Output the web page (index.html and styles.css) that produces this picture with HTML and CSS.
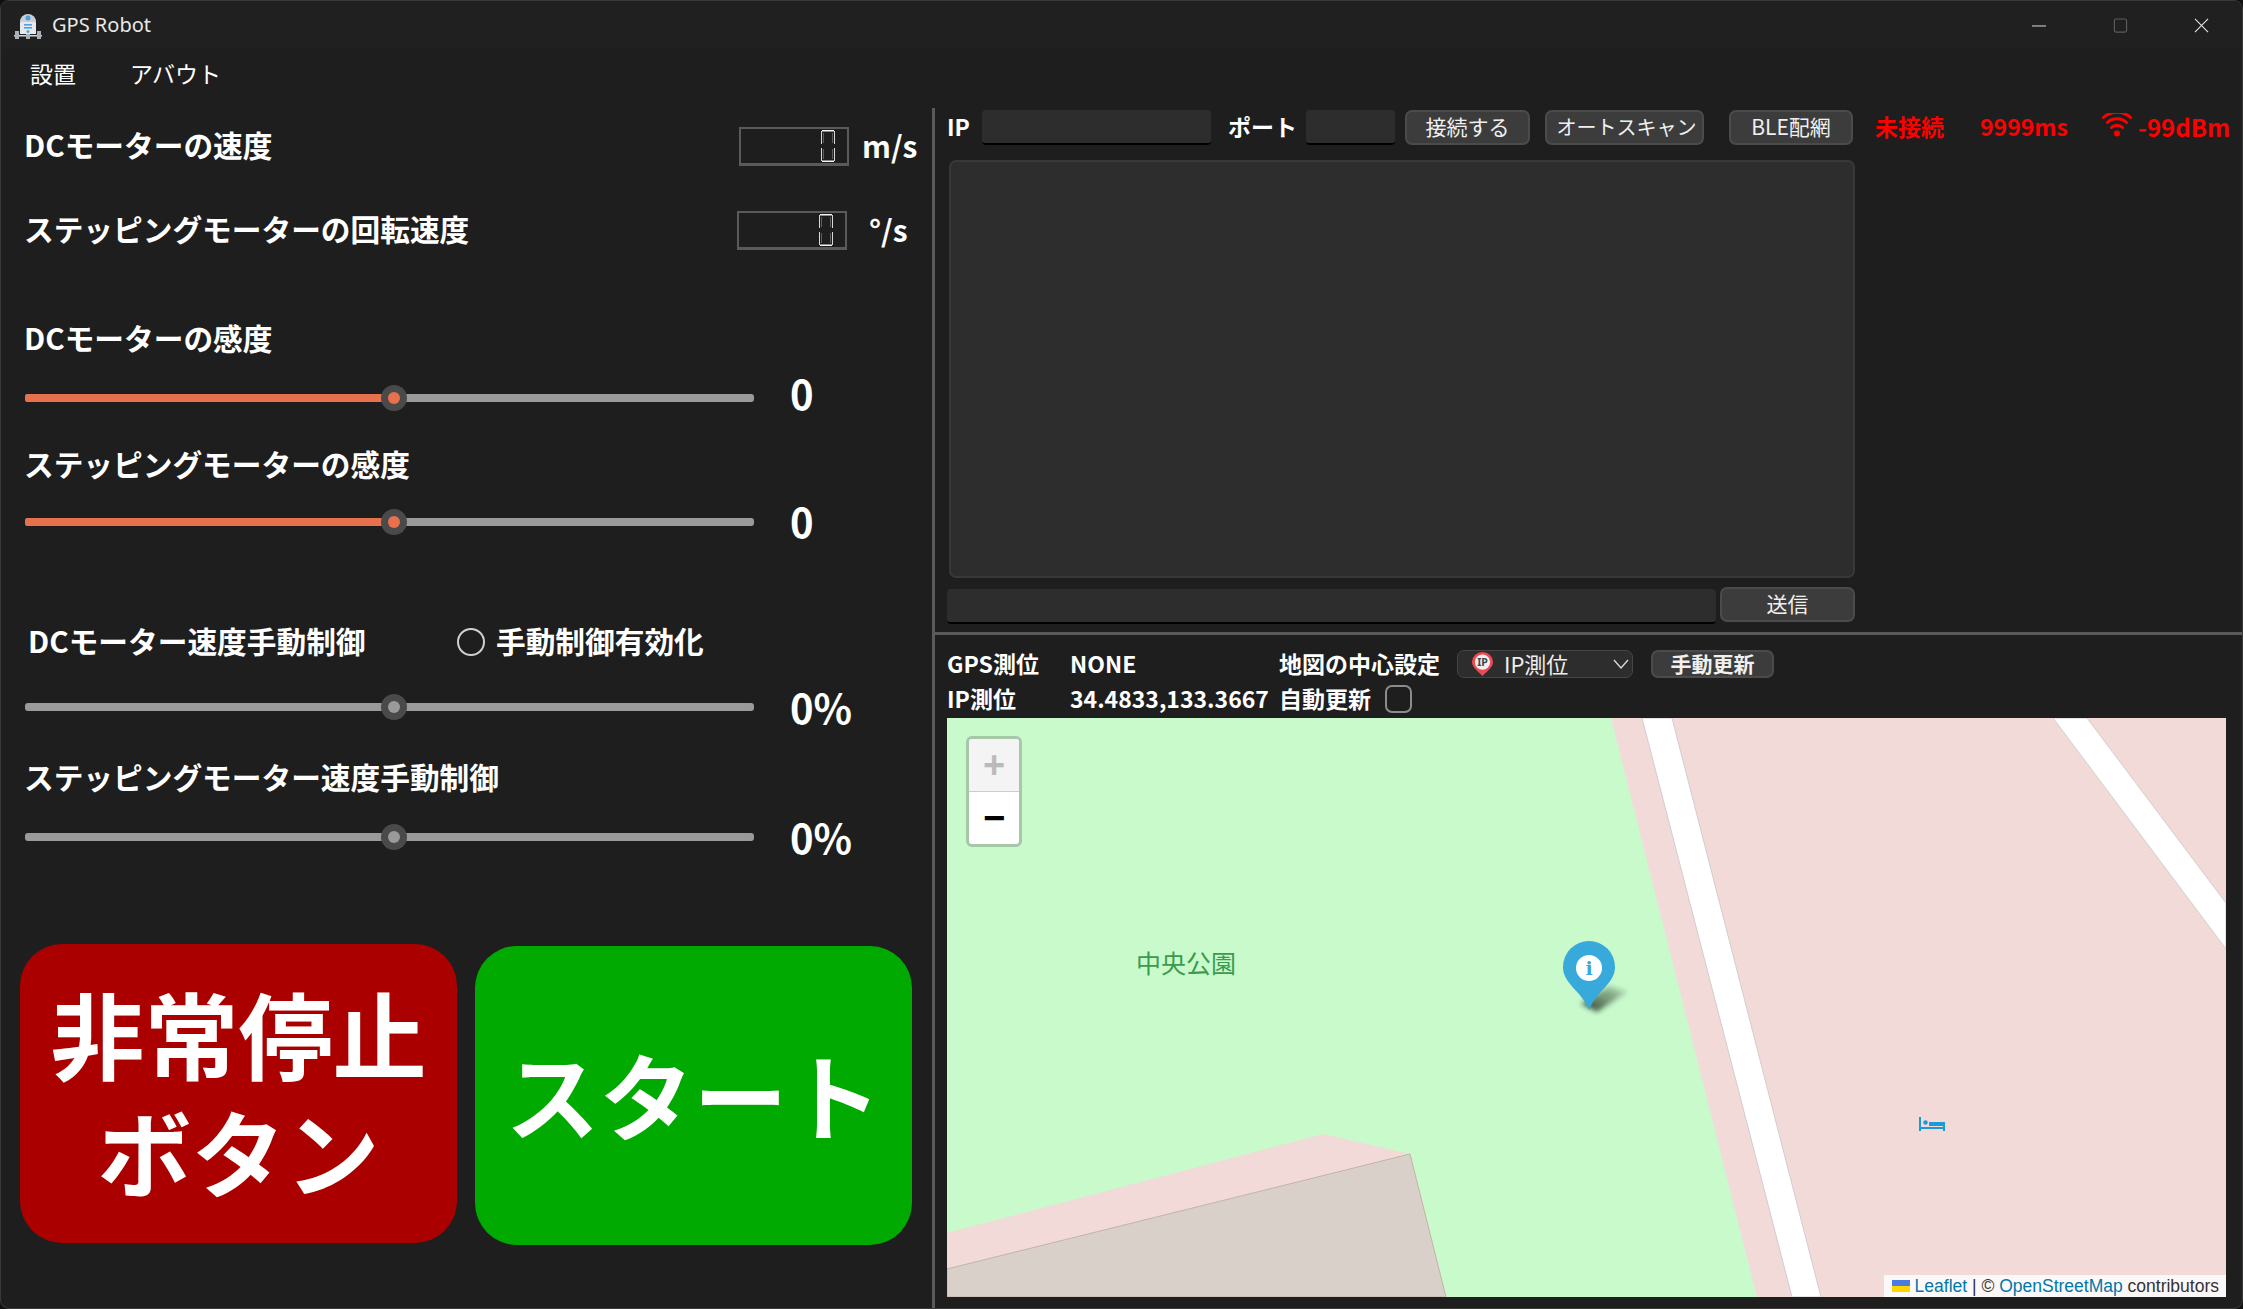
FILE: index.html
```html
<!DOCTYPE html>
<html lang="ja">
<head>
<meta charset="utf-8">
<title>GPS Robot</title>
<link rel="stylesheet" href="styles.css">
</head>
<body>
<div class="window">
  <header class="titlebar">
    <svg class="app-icon" viewBox="0 0 28 28">
      <path d="M6 12a8 8 0 0 1 16 0v11H6z" fill="#e6e8ec"/>
      <path d="M6 11a8 8 0 0 1 16 0z" fill="#c9ced6"/>
      <circle cx="14" cy="7" r="2.500" fill="#4aa3e0"/>
      <rect x="10" y="13" width="8" height="1.600" fill="#4aa3e0"/>
      <rect x="10" y="16" width="8" height="1.600" fill="#4aa3e0"/>
      <circle cx="14" cy="20.500" r="1.500" fill="#4aa3e0"/>
      <rect x="0" y="24" width="28" height="1.500" fill="#d7dade"/>
      <rect x="1" y="20" width="4" height="8" fill="#aab0b8"/>
      <rect x="12" y="23" width="4" height="5" fill="#aab0b8"/>
      <rect x="23" y="20" width="4" height="8" fill="#aab0b8"/>
    </svg>
    <span class="app-title">GPS Robot</span>
    <div class="win-controls">
      <svg class="win-btn" viewBox="0 0 16 16"><path d="M0 8.500h15" stroke="#e8e8e8" stroke-width="1" fill="none"/></svg>
      <svg class="win-btn" viewBox="0 0 16 16"><rect x="1.500" y="1" width="13" height="14" rx="2" stroke="#5c5c5c" stroke-width="1.200" fill="none"/></svg>
      <svg class="win-btn" viewBox="0 0 16 16"><path d="M1 1l14 14M15 1L1 15" stroke="#e8e8e8" stroke-width="1.100" fill="none"/></svg>
    </div>
  </header>
  <nav class="menubar">
    <span class="menu-item">設置</span>
    <span class="menu-item menu-about">アバウト</span>
  </nav>
  <main class="main">
    <section class="left">
      <div class="speed-row row-first">
        <span class="label">DCモーターの速度</span>
        <div class="lcd lcd-a">
          <svg class="lcd-digit" viewBox="0 0 14 32"><path d="M1 .8h12M1 31.200h12" stroke="#f4f4f4" stroke-width="1.600" fill="none"/><path d="M.5 1v13M.5 18v13M13.500 1v13M13.500 18v13" stroke="#d8d8d8" stroke-width="1" fill="none"/><path d="M2.500 3v10M2.500 19v10M11.500 3v10M11.500 19v10" stroke="#5e5e5e" stroke-width="1" fill="none"/></svg>
        </div>
        <span class="unit unit-ms">m/s</span>
      </div>
      <div class="speed-row row-second">
        <span class="label">ステッピングモーターの回転速度</span>
        <div class="lcd lcd-b">
          <svg class="lcd-digit" viewBox="0 0 14 32"><path d="M1 .8h12M1 31.200h12" stroke="#f4f4f4" stroke-width="1.600" fill="none"/><path d="M.5 1v13M.5 18v13M13.500 1v13M13.500 18v13" stroke="#d8d8d8" stroke-width="1" fill="none"/><path d="M2.500 3v10M2.500 19v10M11.500 3v10M11.500 19v10" stroke="#5e5e5e" stroke-width="1" fill="none"/></svg>
        </div>
        <span class="unit unit-deg">°/s</span>
      </div>

      <div class="label-row mt-sens1"><span class="label">DCモーターの感度</span></div>
      <div class="slider-row mt-slider1">
        <div class="slider"><div class="fill"></div><div class="knob knob-active"></div></div>
        <span class="value value-up">0</span>
      </div>
      <div class="label-row mt-sens2"><span class="label">ステッピングモーターの感度</span></div>
      <div class="slider-row mt-slider2">
        <div class="slider"><div class="fill"></div><div class="knob knob-active"></div></div>
        <span class="value">0</span>
      </div>

      <div class="label-row mt-manual1">
        <span class="label label-manual">DCモーター速度手動制御</span>
        <span class="radio"></span>
        <span class="label">手動制御有効化</span>
      </div>
      <div class="slider-row mt-slider3">
        <div class="slider"><div class="knob"></div></div>
        <span class="value value-down">0%</span>
      </div>
      <div class="label-row mt-manual2"><span class="label">ステッピングモーター速度手動制御</span></div>
      <div class="slider-row mt-slider4">
        <div class="slider"><div class="knob"></div></div>
        <span class="value value-down">0%</span>
      </div>

      <div class="big-buttons">
        <div class="big-btn big-red">非常停止<br>ボタン</div>
        <div class="big-btn big-green">スタート</div>
      </div>
    </section>
    <div class="vsplit"></div>
    <section class="right">
      <div class="toolbar">
        <span class="tb-label w-ip">IP</span>
        <div class="field w-ipfield"></div>
        <span class="tb-label w-port">ポート</span>
        <div class="field w-portfield"></div>
        <div class="btn w-connect">接続する</div>
        <div class="btn w-scan">オートスキャン</div>
        <div class="btn w-ble">BLE配網</div>
        <span class="status w-status">未接続</span>
        <span class="status w-ping">9999ms</span>
        <svg class="wifi" viewBox="0 0 30 24">
          <circle cx="15" cy="20.500" r="3" fill="#f00"/>
          <path d="M9.500 14.500a8 8 0 0 1 11 0M5.500 9.500a14 14 0 0 1 19 0M1.500 4.500a20 20 0 0 1 27 0" fill="none" stroke="#f00" stroke-width="3" stroke-linecap="round"/>
        </svg>
        <span class="status w-dbm">-99dBm</span>
      </div>
      <div class="console"></div>
      <div class="send-row">
        <div class="field w-sendfield"></div>
        <div class="btn w-send">送信</div>
      </div>
      <div class="hsplit"></div>
      <div class="gps-grid">
        <span class="gps-label">GPS測位</span>
        <span class="gps-label">NONE</span>
        <span class="gps-label">地図の中心設定</span>
        <div class="combo">
          <svg class="combo-pin" viewBox="0 0 23 25">
            <path d="M11.500 25C5 19 .5 15 .5 10.500a11 10.500 0 0 1 22 0C22.500 15 18 19 11.500 25z" fill="#f0484e"/>
            <circle cx="11.500" cy="10.500" r="8" fill="#eef0f4"/>
            <text class="pin-text" x="11.500" y="14.500">IP</text>
          </svg>
          <span class="combo-text">IP測位</span>
          <svg class="chevron" viewBox="0 0 16 10"><path d="M1 1l7 8 7-8" fill="none" stroke="#ddd" stroke-width="1.300"/></svg>
        </div>
        <div class="btn btn-bold">手動更新</div>
        <span class="gps-label">IP測位</span>
        <span class="gps-label">34.4833,133.3667</span>
        <div class="auto-cell"><span class="gps-label">自動更新</span><span class="checkbox"></span></div>
      </div>
      <div class="map">
        <svg class="map-svg" viewBox="0 0 1279 579" preserveAspectRatio="none">
          <defs>
            <filter id="blur" x="-30%" y="-50%" width="160%" height="200%"><feGaussianBlur stdDeviation="2.500"/></filter>
            <linearGradient id="shadow" x1="0" y1="1" x2="1" y2="0">
              <stop offset="0" stop-color="#1e2a1e" stop-opacity=".9"/>
              <stop offset="1" stop-color="#1e2a1e" stop-opacity=".1"/>
            </linearGradient>
          </defs>
          <rect width="1279" height="579" fill="#c8facc"/>
          <polygon points="664,0 1279,0 1279,579 810,579" fill="#f2dad9"/>
          <polygon points="695,0 725,0 874,579 845,579" fill="#fff" stroke="#d4cccc" stroke-width="1"/>
          <polygon points="1106,0 1140,0 1279,185 1279,231" fill="#fff" stroke="#d4cccc" stroke-width="1"/>
          <polygon points="0,515 376,416 463,436 499,579 0,579" fill="#f2dad9"/>
          <polygon points="0,551 463,436 499,579 0,579" fill="#d9d0c9" stroke="#c4b3a8" stroke-width="1"/>
          <text class="park" x="189" y="255">中央公園</text>
          <polygon points="634,286 650,294 680,274 662,268" fill="url(#shadow)" filter="url(#blur)"/>
          <path d="M642 292C634 272 616 266 616 249a26 26 0 0 1 52 0c0 17-18 23-26 43z" fill="#38a9db"/>
        </svg>
        <div class="marker-i">i</div>
        <svg class="bed" viewBox="0 0 26 14"><path d="M1 0v14M25 5v9M1 11h24" stroke="#1a9ad8" stroke-width="2" fill="none"/><circle cx="6.500" cy="5.500" r="2.200" fill="#1a9ad8"/><rect x="10" y="5" width="14" height="4" fill="#1a9ad8"/></svg>
        <div class="zoom-ctl">
          <div class="zoom-btn zoom-plus">+</div>
          <div class="zoom-btn zoom-minus">−</div>
        </div>
        <div class="attribution">
          <svg class="flag" viewBox="0 0 18 12"><rect width="18" height="6" fill="#4c7be0"/><rect y="6" width="18" height="6" fill="#ffd500"/></svg>
          <span class="link">Leaflet</span><span> | © </span><span class="link">OpenStreetMap</span><span> contributors</span>
        </div>
      </div>
    </section>
  </main>
</div>
</body>
</html>
```
FILE: styles.css
```css
* { box-sizing: border-box; }
html, body { margin: 0; height: 100%; background: #111; }
body { font-family: "Noto Sans CJK JP", "Noto Sans", sans-serif; color: #fff; overflow: hidden; }
.window { width: 2243px; height: 1309px; background: #1e1e1e; border: 1px solid #3a3a3a; border-radius: 9px; display: flex; flex-direction: column; overflow: hidden; }

.titlebar { height: 48px; flex: none; display: flex; align-items: center; background: #202020; padding-left: 13px; }
.app-icon { width: 28px; height: 28px; }
.app-title { margin-left: 10px; font-size: 20px; font-family: "Noto Sans", sans-serif; color: #e8e8e8; padding-bottom: 2px; }
.win-controls { margin-left: auto; display: flex; gap: 66px; padding-right: 33px; }
.win-btn { width: 15px; height: 15px; }

.menubar { height: 51px; flex: none; display: flex; align-items: center; padding-left: 29px; padding-bottom: 4px; font-size: 23px; }
.menu-about { margin-left: 54px; }

.main { flex: 1; display: flex; min-height: 0; }
.left { width: 931px; flex: none; padding-left: 23px; }
.vsplit { width: 3px; flex: none; margin-top: 8px; background: #5a5a5a; }

.label { font-size: 29.700px; font-weight: 700; white-space: nowrap; line-height: 40px; padding-bottom: 3px; }
.speed-row { height: 40px; display: flex; align-items: center; position: relative; }
.row-first { margin-top: 26px; }
.row-second { margin-top: 44px; }
.lcd { width: 110px; height: 39px; border: 2px solid #5a5a5a; border-bottom-width: 3px; display: flex; justify-content: flex-end; align-items: center; padding-right: 12px; flex: none; }
.lcd-a { margin-left: auto; margin-right: 83px; }
.lcd-b { margin-left: auto; margin-right: 85px; }
.lcd-digit { width: 14px; height: 32px; }
.unit { position: absolute; font-size: 30px; font-weight: 700; padding-bottom: 3px; }
.unit-ms { left: 838px; }
.unit-deg { left: 845px; }

.label-row { height: 40px; display: flex; align-items: center; }
.mt-sens1 { margin-top: 69px; }
.mt-sens2 { margin-top: 27px; }
.mt-manual1 { margin-top: 80px; }
.mt-manual2 { margin-top: 31px; }
.label-manual { margin-left: 4px; width: 429px; }
.radio { width: 28px; height: 28px; border: 2px solid #d0d0d0; border-radius: 50%; margin-right: 11px; flex: none; }

.slider-row { height: 40px; display: flex; align-items: center; }
.mt-slider1 { margin-top: 19px; }
.mt-slider2 { margin-top: 17px; }
.mt-slider3 { margin-top: 25px; }
.mt-slider4 { margin-top: 19px; }
.slider { width: 729px; height: 8px; margin-left: 1px; border-radius: 3px; background: #9a9a9a; position: relative; flex: none; }
.fill { position: absolute; left: 0; top: 0; bottom: 0; width: 370px; background: #e8714d; border-radius: 3px 0 0 3px; }
.knob { position: absolute; left: 356px; top: -9px; width: 26px; height: 26px; border-radius: 50%; background: #4a4a4a; }
.knob::after { content: ""; position: absolute; left: 7px; top: 7px; width: 12px; height: 12px; border-radius: 50%; background: #9a9a9a; }
.knob-active::after { background: #e8714d; }
.value { margin-left: 36px; font-size: 40px; font-weight: 700; line-height: 40px; padding-bottom: 3px; }
.value-up { margin-top: -7px; }
.value-down { margin-top: 3px; }

.big-buttons { margin-top: 87px; margin-left: -4px; display: flex; gap: 18px; align-items: flex-start; }
.big-btn { width: 437px; height: 299px; border-radius: 42px; display: flex; align-items: center; justify-content: center; text-align: center; font-size: 94px; font-weight: 700; line-height: 118px; padding-bottom: 6px; }
.big-red { background: #aa0000; }
.big-green { background: #00aa00; margin-top: 2px; }

.right { flex: 1; min-width: 0; padding-left: 12px; }
.toolbar { height: 37px; margin-top: 9px; display: flex; align-items: center; }
.tb-label { font-size: 23px; font-weight: 700; white-space: nowrap; flex: none; padding-bottom: 3px; }
.field { height: 35px; background: #2d2d2d; border-bottom: 2px solid #000; border-radius: 4px; flex: none; }
.btn { height: 35px; background: #3c3c3c; border: 2px solid #4b4b4b; border-radius: 7px; display: flex; align-items: center; justify-content: center; font-size: 21px; color: #f0f0f0; flex: none; white-space: nowrap; padding-bottom: 3px; }
.status { color: #f00; font-size: 23px; font-weight: 700; white-space: nowrap; flex: none; padding-bottom: 3px; }
.w-ip { width: 22px; }
.w-ipfield { width: 229px; margin-left: 13px; }
.w-port { width: 66px; margin-left: 17px; }
.w-portfield { width: 89px; margin-left: 12px; }
.w-connect { width: 125px; margin-left: 10px; }
.w-scan { width: 159px; margin-left: 15px; font-size: 20px; padding-left: 4px; }
.w-ble { width: 124px; margin-left: 25px; }
.w-status { width: 70px; margin-left: 22px; }
.w-ping { width: 92px; margin-left: 35px; }
.wifi { width: 30px; height: 24px; margin-left: 30px; margin-bottom: 6px; flex: none; }
.w-dbm { width: 92px; margin-left: 6px; font-size: 24px; }

.console { width: 906px; height: 418px; margin-top: 14px; margin-left: 2px; background: #2d2d2d; border: 2px solid #383838; border-radius: 7px; }
.send-row { height: 36px; margin-top: 9px; display: flex; gap: 4px; align-items: flex-start; }
.w-sendfield { width: 769px; margin-top: 2px; }
.w-send { width: 135px; }
.hsplit { height: 3px; margin: 9px 0 0 -12px; background: #5a5a5a; }

.gps-grid { display: grid; grid-template-columns: 123px 209px 178px 194px 123px; grid-template-rows: 28px 28px; row-gap: 7px; margin-top: 15px; align-items: center; }
.gps-label { font-size: 23px; font-weight: 700; white-space: nowrap; line-height: 28px; padding-bottom: 3px; }
.combo { width: 176px; height: 28px; background: #2d2d2d; border: 1px solid #454545; border-radius: 7px; display: flex; align-items: center; padding-left: 13px; }
.combo-pin { width: 23px; height: 24px; flex: none; }
.pin-text { font-family: "Noto Sans", sans-serif; font-size: 11px; font-weight: 700; fill: #444; text-anchor: middle; }
.combo-text { margin-left: 10px; font-size: 22px; color: #eee; padding-bottom: 3px; }
.chevron { width: 16px; height: 10px; margin-left: auto; margin-right: 3px; }
.btn-bold { height: 28px; font-weight: 700; font-size: 21px; padding: 0 0 3px; }
.auto-cell { display: flex; align-items: center; }
.checkbox { width: 27px; height: 28px; margin-left: 14px; border: 2px solid #8c8c8c; border-radius: 7px; flex: none; }

.map { width: 1279px; height: 579px; margin-top: 5px; position: relative; overflow: hidden; }
.map-svg { display: block; width: 100%; height: 100%; }
.park { font-size: 25px; fill: #3b9a4e; font-weight: 400; }
.marker-i { position: absolute; left: 629px; top: 237px; width: 26px; height: 26px; border-radius: 50%; background: #fff; color: #38a9db; font-family: "DejaVu Serif", serif; font-weight: 700; font-size: 19px; line-height: 26px; text-align: center; }
.bed { position: absolute; left: 972px; top: 399px; width: 26px; height: 14px; }
.zoom-ctl { position: absolute; left: 19px; top: 18px; width: 56px; height: 111px; border: 3px solid #a6c8a9; border-radius: 6px; background: #fff; overflow: hidden; }
.zoom-btn { height: 52px; display: flex; align-items: center; justify-content: center; font-family: "Liberation Sans", sans-serif; font-size: 38px; font-weight: 700; line-height: 1; }
.zoom-plus { background: #f4f4f4; color: #bbb; border-bottom: 1px solid #ccc; height: 53px; }
.zoom-minus { color: #000; }
.attribution { position: absolute; right: 0; bottom: 0; height: 22px; padding: 0 7px 0 8px; background: rgba(255,255,255,.8); font-family: "Liberation Sans", sans-serif; font-size: 17.500px; color: #333; display: flex; align-items: center; white-space: pre; }
.flag { width: 18px; height: 12px; margin-right: 5px; }
.link { color: #0078a8; }
```
